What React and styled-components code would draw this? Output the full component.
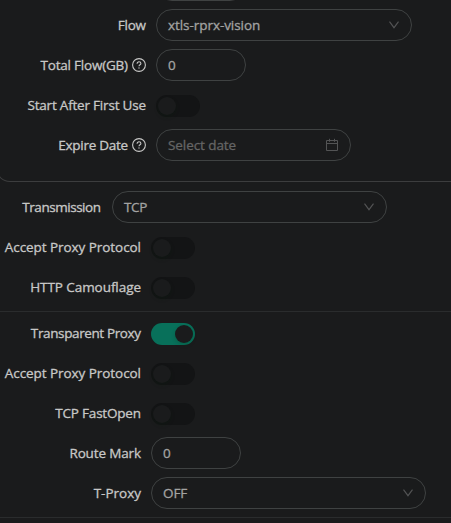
import React from "react";
import styled, { createGlobalStyle } from "styled-components";

const GlobalStyle = createGlobalStyle`
  * { box-sizing: border-box; }
  body { margin: 0; background: #1a1b1c; overflow: hidden; }
`;

const Page = styled.main`
  width: 451px;
  height: 523px;
  overflow: hidden;
  background: #1a1b1c;
  color: #c8c8c7;
  font-family: "Open Sans", "Noto Sans", sans-serif;
  font-size: 13.5px;
  line-height: 22px;
  -webkit-text-stroke: 0.3px currentColor;
`;

const ClientCard = styled.section`
  height: 182px;
  width: 475px;
  margin-left: -4px;
  padding-left: 3px;
  border: 1px solid #3c3d3e;
  border-top: 0;
  border-radius: 0 0 14px 14px;
  overflow: hidden;
`;

const Section = styled.section`
  padding-top: ${(p) => p.$top}px;
  border-bottom: 1px solid #2a2c2d;
`;

const Row = styled.div`
  display: flex;
  align-items: center;
  height: 32px;
  margin-bottom: 8px;
`;

const ClippedRow = styled(Row)`
  margin-top: -31px;
`;

const Label = styled.label`
  display: flex;
  justify-content: flex-end;
  align-items: center;
  gap: 4px;
  flex: none;
  width: ${(p) => p.$end}px;
  margin-right: ${(p) => p.$gap ?? 10}px;
  white-space: nowrap;
`;

const LabelText = styled.span`
  letter-spacing: ${(p) => p.$track}px;
  margin-right: ${(p) => -p.$track}px;
`;

const Field = styled.div`
  display: flex;
  align-items: center;
  justify-content: space-between;
  flex: none;
  width: ${(p) => p.$width}px;
  height: 32px;
  padding: 0 11px;
  border: 1px solid #3f4242;
  border-radius: 16px;
  color: ${(p) => (p.$muted ? "#656565" : "#a3a3a2")};
  letter-spacing: ${(p) => p.$track ?? 0}px;
  svg { color: #535455; }
`;

const Toggle = styled.button`
  display: flex;
  align-items: center;
  justify-content: ${(p) => (p.$on ? "flex-end" : "flex-start")};
  width: 44px;
  height: 22px;
  margin: 2px 0 0;
  padding: 2px;
  border: 0;
  border-radius: 11px;
  background: ${(p) => (p.$on ? "#08705a" : "#131415")};
`;

const Knob = styled.span`
  width: 18px;
  height: 18px;
  border-radius: 50%;
  background: #1a1b1c;
  box-shadow: 0 2px 4px rgba(0, 35, 11, 0.2);
`;

const Help = () => (
  <svg width="14" height="14" viewBox="0 0 14 14" fill="none" stroke="currentColor">
    <circle cx="7" cy="7" r="6.4" strokeWidth="1.1" />
    <path d="M5.1 5.7C5.1 4.5 5.9 3.8 7 3.8s1.9.7 1.9 1.7C8.9 6.8 7 6.8 7 8.2" strokeWidth="1.1" />
    <circle cx="7" cy="10" r=".65" fill="currentColor" stroke="none" />
  </svg>
);

const Chevron = () => (
  <svg width="12" height="12" viewBox="0 0 12 12" fill="none" stroke="currentColor">
    <path d="M1.5 2.6 6 8.7l4.5-6.1" strokeWidth="1.1" />
  </svg>
);

const Calendar = () => (
  <svg width="14" height="14" viewBox="0 0 14 14" fill="none" stroke="currentColor">
    <path d="M1.5 2.5h11v10h-11zM1.5 5.5h11M4.5.8v3M9.5.8v3" />
  </svg>
);

const FormRow = ({ label, end, track = 0, gap, help, children }) => (
  <Row>
    <Label $end={end} $gap={gap}>
      <LabelText $track={track}>{label}</LabelText>
      {help && <Help />}
    </Label>
    {children}
  </Row>
);

const Switch = ({ on = false }) => (
  <Toggle type="button" role="switch" aria-checked={on} $on={on}>
    <Knob />
  </Toggle>
);

export default function App() {
  return (
    <Page>
      <GlobalStyle />
      <ClientCard>
        <ClippedRow>
          <Label $end={146} />
          <Field $width={90} />
        </ClippedRow>
        <FormRow label="Flow" end={146} track={-0.25}>
          <Field $width={256} $track={-0.06}>xtls-rprx-vision<Chevron /></Field>
        </FormRow>
        <FormRow label="Total Flow(GB)" end={146} track={-0.22} help>
          <Field $width={90}>0</Field>
        </FormRow>
        <FormRow label="Start After First Use" end={146} track={-0.2}>
          <Switch />
        </FormRow>
        <FormRow label="Expire Date" end={146} track={-0.28} help>
          <Field $width={195} $track={-0.08} $muted>Select date<Calendar /></Field>
        </FormRow>
      </ClientCard>
      <Section $top={9}>
        <FormRow label="Transmission" end={101} gap={11} track={-0.46}>
          <Field $width={275} $track={-0.35}>TCP<Chevron /></Field>
        </FormRow>
        <FormRow label="Accept Proxy Protocol" end={141} track={-0.06}>
          <Switch />
        </FormRow>
        <FormRow label="HTTP Camouflage" end={141} track={-0.06}>
          <Switch />
        </FormRow>
      </Section>
      <Section $top={5}>
        <FormRow label="Transparent Proxy" end={141} track={-0.38}>
          <Switch on />
        </FormRow>
        <FormRow label="Accept Proxy Protocol" end={141} track={-0.06}>
          <Switch />
        </FormRow>
        <FormRow label="TCP FastOpen" end={141} track={-0.2}>
          <Switch />
        </FormRow>
        <FormRow label="Route Mark" end={141} track={-0.15}>
          <Field $width={90}>0</Field>
        </FormRow>
        <FormRow label="T-Proxy" end={141}>
          <Field $width={275} $track={-0.1}>OFF<Chevron /></Field>
        </FormRow>
      </Section>
    </Page>
  );
}
